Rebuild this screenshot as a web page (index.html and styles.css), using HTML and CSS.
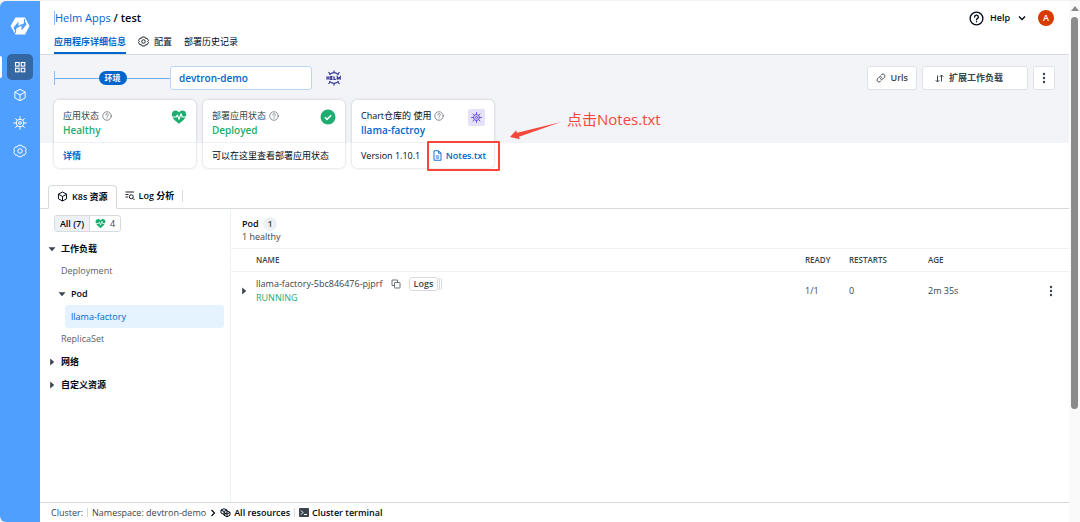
FILE: index.html
```html
<!DOCTYPE html>
<html lang="zh">
<head>
    <meta charset="utf-8">
    <title>Helm Apps / test</title>
    <link rel="stylesheet" href="styles.css">
</head>
<body>
    <!-- shared icons -->
    <svg class="sprite" width="0" height="0">
        <symbol id="i-help" viewBox="0 0 20 20" fill="none" stroke="currentColor" stroke-linecap="round">
            <circle cx="10" cy="10" r="8.5"/>
            <path d="M7.5 8a2.5 2.5 0 1 1 3.6 2.2c-.8.4-1.1.8-1.1 1.6"/>
            <path d="M10 14.2v.2"/>
        </symbol>
        <symbol id="i-gear" viewBox="0 0 20 20" fill="none" stroke="currentColor" stroke-linejoin="round">
            <circle cx="10" cy="10" r="3.2"/>
            <path d="M7.6 1.8h4.800l1.400 2.400h2.800L19 8.200 17.600 10l1.400 1.800-2.400 4h-2.800l-1.400 2.400H7.600l-1.400-2.400H3.400L1 11.800 2.400 10 1 8.200l2.400-4h2.800z"/>
        </symbol>
        <symbol id="i-helm" viewBox="0 0 20 20" fill="none" stroke="currentColor" stroke-linecap="round">
            <circle cx="10" cy="10" r="5.4"/>
            <circle cx="10" cy="10" r="2"/>
            <path d="M10 1v3.600M10 15.400V19M1 10h3.600M15.400 10H19M3.600 3.600l2.600 2.600M13.800 13.800l2.600 2.600M16.400 3.600l-2.600 2.600M6.200 13.800l-2.600 2.600"/>
        </symbol>
        <symbol id="i-cube" viewBox="0 0 20 20" fill="none" stroke="currentColor" stroke-linejoin="round">
            <path d="M10 1.800l7.400 4v8.400l-7.400 4-7.400-4V5.800z"/>
            <path d="M2.600 5.800l7.400 4.200 7.400-4.200M10 10v8.200"/>
        </symbol>
        <symbol id="i-heart" viewBox="0 0 20 20">
            <path fill="#1dad70" d="M10 18.500C6 15.500 1 11.800 1 7c0-3 2.200-5 4.700-5C7.500 2 9.100 3 10 4.500 10.900 3 12.500 2 14.300 2 16.800 2 19 4 19 7c0 4.800-5 8.500-9 11.500z"/>
            <path fill="none" stroke="#fff" stroke-width="1.400" stroke-linejoin="round" d="M1 10h5.500l1.500-2.500 2 5.500 2.500-7 1.500 4h5"/>
        </symbol>
        <symbol id="i-dots" viewBox="0 0 4 12" fill="currentColor">
            <circle cx="2" cy="2" r="1.200"/><circle cx="2" cy="6" r="1.200"/><circle cx="2" cy="10" r="1.200"/>
        </symbol>
        <symbol id="i-caret" viewBox="0 0 8 8" fill="currentColor">
            <path d="M.5 2.200h7L4 6.200z"/>
        </symbol>
    </svg>

    <div class="app">
        <nav class="sidebar">
            <a class="logo" href="#" aria-label="Home">
                <svg width="20" height="18" viewBox="0 0 20 18">
                    <path fill="#fff" d="M5.500.5h9.500L19.500 9 15 17.500H5.500L.5 9z"/>
                    <path fill="#4e9fff" d="M8.500 4.500v5.500L4.500 13l-1-2.500zM11.500 13.500V8l4-3 1 2.500z"/>
                    <path fill="none" stroke="#4e9fff" stroke-width="1.200" d="M8 9.800l4-2.200M5.500 12v4M14.500 6V2"/>
                </svg>
            </a>
            <a class="nav-item active" href="#" aria-label="Applications">
                <svg width="12" height="12" viewBox="0 0 12 12" fill="none" stroke="currentColor" stroke-width="1.100">
                    <rect x="1.500" y="1.500" width="3.600" height="3.600"/><rect x="7.200" y="1.500" width="3.600" height="3.600"/>
                    <rect x="1.500" y="7.200" width="3.600" height="3.600"/><rect x="7.200" y="7.200" width="3.600" height="3.600"/>
                </svg>
            </a>
            <a class="nav-item" href="#" aria-label="Charts"><svg class="nav-icon"><use href="#i-cube"/></svg></a>
            <a class="nav-item" href="#" aria-label="Clusters"><svg class="nav-icon"><use href="#i-helm"/></svg></a>
            <a class="nav-item" href="#" aria-label="Settings"><svg class="nav-icon"><use href="#i-gear"/></svg></a>
        </nav>

        <main class="main">
            <header class="header">
                <div class="title-row">
                    <h1 class="title"><a href="#">Helm Apps</a> / test</h1>
                    <button class="help" type="button">
                        <svg class="help-icon"><use href="#i-help"/></svg>
                        Help
                        <svg class="chevron" width="8" height="8" viewBox="0 0 8 8" fill="none" stroke="currentColor" stroke-width="1.400"><path d="M1 2.500l3 3 3-3"/></svg>
                    </button>
                    <button class="avatar" type="button">A</button>
                </div>
                <div class="tabs">
                    <a class="tab active" href="#">应用程序详细信息</a>
                    <a class="tab" href="#"><svg class="tab-icon"><use href="#i-gear"/></svg>配置</a>
                    <a class="tab" href="#">部署历史记录</a>
                </div>
            </header>

            <section class="overview">
                <div class="env-row">
                    <span class="env-line"><label class="env-label" for="env">环境</label></span>
                    <select class="env-select" id="env"><option>devtron-demo</option></select>
                    <svg class="helm-logo" width="16" height="16" viewBox="0 0 32 32" fill="none" stroke="#2b2a8c" stroke-width="2.200">
                        <path d="M7 10a11 11 0 0 1 18 0M7 22a11 11 0 0 0 18 0M16 6V1M16 26v5M8 8L5 4M24 8l3-4M8 24l-3 4M24 24l3 4"/>
                        <path d="M2 12.500v7M6 12.500v7M2 16h4M13 13.200H9.500v5.600H13M9.500 16h3M16 12.500v6.300h3.500M22.500 19.500v-6l3 4 3-4v6"/>
                    </svg>
                    <div class="actions">
                        <button class="btn" type="button">
                            <svg width="10" height="10" viewBox="0 0 20 20" fill="none" stroke="currentColor" stroke-width="1.800" stroke-linecap="round"><path d="M8.500 11.500a4 4 0 0 0 5.600 0l3-3a4 4 0 0 0-5.600-5.600L10 4.400M11.500 8.500a4 4 0 0 0-5.600 0l-3 3a4 4 0 0 0 5.600 5.600l1.500-1.500"/></svg>
                            Urls
                        </button>
                        <button class="btn btn-wide" type="button">
                            <svg width="9" height="9" viewBox="0 0 18 18" fill="none" stroke="currentColor" stroke-width="2"><path d="M5 3v13M1.500 12.500L5 16l3.500-3.500M13 15V2M9.500 5.500L13 2l3.500 3.500"/></svg>
                            扩展工作负载
                        </button>
                        <button class="btn btn-more" type="button" aria-label="More"><svg class="dots"><use href="#i-dots"/></svg></button>
                    </div>
                </div>

                <div class="cards">
                    <article class="card">
                        <div class="card-top">
                            <div>
                                <div class="card-label">应用状态 <svg class="hint"><use href="#i-help"/></svg></div>
                                <div class="card-value ok">Healthy</div>
                            </div>
                            <svg class="card-icon"><use href="#i-heart"/></svg>
                        </div>
                        <div class="card-bottom"><a class="link" href="#">详情</a></div>
                    </article>
                    <article class="card">
                        <div class="card-top">
                            <div>
                                <div class="card-label">部署应用状态 <svg class="hint"><use href="#i-help"/></svg></div>
                                <div class="card-value ok">Deployed</div>
                            </div>
                            <svg class="card-icon" viewBox="0 0 16 16"><circle cx="8" cy="8" r="7.500" fill="#1dad70"/><path d="M4.800 8.200l2.200 2.200 4.200-4.200" fill="none" stroke="#fff" stroke-width="1.500"/></svg>
                        </div>
                        <div class="card-bottom">可以在这里查看部署应用状态</div>
                    </article>
                    <article class="card">
                        <div class="card-top">
                            <div>
                                <div class="card-label dark">Chart仓库的 使用 <svg class="hint"><use href="#i-help"/></svg></div>
                                <div class="card-value"><a href="#">llama-factroy</a></div>
                            </div>
                            <span class="chart-icon"><svg><use href="#i-helm"/></svg></span>
                        </div>
                        <div class="card-bottom">
                            Version 1.10.1
                            <a class="notes" href="#">
                                <svg width="9" height="11" viewBox="0 0 18 22" fill="none" stroke="currentColor" stroke-width="1.800" stroke-linejoin="round"><path d="M2 1.500h9l5 5v14H2zM11 1.500v5h5M5.500 12h7M5.500 16h7"/></svg>
                                Notes.txt
                            </a>
                        </div>
                        <span class="callout-box"></span>
                        <div class="callout">
                            <svg width="52" height="20" viewBox="0 0 52 20"><path fill="#f5483b" d="M0 16L6 9.500l1.200 2.300L51 1 9 15.800l.8 2.400z"/></svg>
                            <span>点击Notes.txt</span>
                        </div>
                    </article>
                </div>
            </section>

            <div class="res-tabs">
                <a class="res-tab active" href="#"><svg class="res-icon"><use href="#i-cube"/></svg>K8s 资源</a>
                <a class="res-tab" href="#">
                    <svg width="10" height="10" viewBox="0 0 20 20" fill="none" stroke="currentColor" stroke-width="1.800"><path d="M1 2h17M1 7h6M1 12h5"/><circle cx="12.500" cy="11.500" r="4"/><path d="M15.500 14.500L19 18"/></svg>
                    Log 分析
                </a>
                <span class="res-sep"></span>
            </div>

            <section class="resources">
                <aside class="tree">
                    <div class="filter">
                        <button class="filter-btn active" type="button">All (7)</button>
                        <button class="filter-btn" type="button"><svg><use href="#i-heart"/></svg>4</button>
                    </div>
                    <div class="node group"><svg class="caret"><use href="#i-caret"/></svg>工作负载</div>
                    <a class="node leaf" href="#">Deployment</a>
                    <div class="node group nested"><svg class="caret"><use href="#i-caret"/></svg>Pod</div>
                    <a class="node selected" href="#">llama-factory</a>
                    <a class="node leaf" href="#">ReplicaSet</a>
                    <div class="node group"><svg class="caret closed"><use href="#i-caret"/></svg>网络</div>
                    <div class="node group"><svg class="caret closed"><use href="#i-caret"/></svg>自定义资源</div>
                </aside>

                <div class="detail">
                    <div class="detail-head">
                        <h2>Pod <span class="count">1</span></h2>
                        <p>1 healthy</p>
                    </div>
                    <table class="pods">
                        <thead>
                            <tr>
                                <th class="col-toggle"></th>
                                <th>NAME</th>
                                <th class="col-ready">READY</th>
                                <th class="col-restarts">RESTARTS</th>
                                <th class="col-age">AGE</th>
                                <th class="col-menu"></th>
                            </tr>
                        </thead>
                        <tbody>
                            <tr>
                                <td class="col-toggle"><svg class="caret closed"><use href="#i-caret"/></svg></td>
                                <td>
                                    <div class="pod-name">
                                        llama-factory-5bc846476-pjprf
                                        <svg class="copy" width="10" height="10" viewBox="0 0 20 20" fill="none" stroke="currentColor" stroke-width="1.800" stroke-linejoin="round"><rect x="7" y="7" width="11" height="11" rx="1"/><path d="M13 7V2H2v11h5"/></svg>
                                        <button class="logs" type="button">Logs</button>
                                    </div>
                                    <div class="pod-status">RUNNING</div>
                                </td>
                                <td>1/1</td>
                                <td>0</td>
                                <td>2m 35s</td>
                                <td><svg class="dots"><use href="#i-dots"/></svg></td>
                            </tr>
                        </tbody>
                    </table>
                </div>
            </section>

            <footer class="footer">
                <span>Cluster:</span>
                <span class="foot-sep"></span>
                <span>Namespace: devtron-demo</span>
                <svg width="6" height="8" viewBox="0 0 6 8" fill="none" stroke="#000a14" stroke-width="1.200"><path d="M1.500 1l3 3-3 3"/></svg>
                <a href="#">
                    <svg width="11" height="10" viewBox="0 0 22 20" fill="none" stroke="currentColor" stroke-width="2" stroke-linejoin="round"><path d="M8 1.500l6 2.500v6l-6 3-6-3V4zM2 4l6 3 6-3M8 7v6M14 6l6 2.500v6l-6 3-6-3v-2M8 9l6 3 6-3M14 12v5.500"/></svg>
                    All resources
                </a>
                <span class="foot-sep"></span>
                <a href="#">
                    <svg width="10" height="9" viewBox="0 0 10 9"><rect width="10" height="9" rx="1" fill="#3b444c"/><path d="M2 2.500l2 2-2 2M5 6.500h3" fill="none" stroke="#fff"/></svg>
                    Cluster terminal
                </a>
            </footer>
        </main>

        <div class="scrollbar"><span class="scroll-up"></span><span class="scroll-thumb"></span></div>
    </div>
</body>
</html>
```
FILE: styles.css
```css
* {
    box-sizing: border-box;
}
body {
    margin: 0;
    background: #f2f2f2;
    color: #3b444c;
    font-family: "Open Sans", "Noto Sans CJK SC", sans-serif;
    font-size: 9px;
    line-height: 14px;
}
a {
    color: #0066cc;
    text-decoration: none;
}
button {
    padding: 0;
    border: none;
    background: none;
    color: inherit;
    font: inherit;
    cursor: pointer;
}
svg {
    flex: none;
}
h1, h2, p {
    margin: 0;
}
.sprite {
    position: absolute;
}
.app {
    display: flex;
    height: 100vh;
    padding-top: 1px;
}

/* sidebar */
.sidebar {
    display: flex;
    flex-direction: column;
    align-items: center;
    gap: 2px;
    width: 40px;
    padding-top: 16px;
    background: #4e9fff;
    border-radius: 6px 0 0 6px;
}
.logo {
    height: 35px;
}
.nav-item {
    display: flex;
    align-items: center;
    justify-content: center;
    width: 26px;
    height: 26px;
    border-radius: 5px;
    color: #fff;
}
.nav-item.active {
    position: relative;
    background: #3567a3;
}
.nav-item.active::before {
    content: "";
    position: absolute;
    left: -7px;
    top: 2px;
    width: 2px;
    height: 22px;
    border-radius: 0 2px 2px 0;
    background: #fff;
}
.nav-icon {
    width: 14px;
    height: 14px;
    stroke-width: 1.4;
}

.main {
    flex: 1;
    min-width: 0;
    display: flex;
    flex-direction: column;
    background: #fff;
}

/* header */
.header {
    padding: 8px 15px 0 14px;
    border-bottom: 1px solid #d6dbdf;
}
.title-row {
    display: flex;
    align-items: center;
    height: 18px;
}
.title {
    flex: 1;
    border-left: 1px solid #8dbcec;
    color: #000a14;
    font-size: 11px;
    font-weight: 600;
}
.title a {
    font-weight: 400;
}
.help {
    display: flex;
    align-items: center;
    gap: 6px;
    color: #000a14;
    font-weight: 600;
}
.help-icon {
    width: 15px;
    height: 15px;
    stroke-width: 1.8;
}
.chevron {
    margin-left: 2px;
}
.avatar {
    width: 16px;
    height: 16px;
    margin-left: 12px;
    border-radius: 50%;
    background: #d93a00;
    color: #fff;
    font-weight: 600;
    line-height: 16px;
}
.tabs {
    display: flex;
    gap: 12px;
}
.tab {
    display: flex;
    align-items: center;
    gap: 5px;
    height: 27px;
    padding-top: 4px;
    border-bottom: 2px solid transparent;
    color: #000a14;
}
.tab.active {
    border-bottom-color: #0066cc;
    color: #0066cc;
    font-weight: 600;
}
.tab-icon {
    width: 11px;
    height: 11px;
    stroke-width: 1.6;
}

/* environment + cards */
.overview {
    padding: 11px 14px 0;
    background: linear-gradient(#f2f4f8 88px, #fff 88px);
}
.env-row {
    display: flex;
    align-items: center;
}
.env-line {
    display: flex;
    justify-content: center;
    width: 116px;
    border-left: 1px solid #8dbcec;
    background: linear-gradient(#6cabeb, #6cabeb) center / 100% 1px no-repeat;
}
.env-label {
    padding: 0 6px;
    border-radius: 7px;
    background: #0066cc;
    color: #fff;
    font-size: 8px;
    font-weight: 600;
}
.env-select {
    width: 142px;
    height: 24px;
    padding: 0 8px;
    appearance: none;
    border: 1px solid #b8d8f8;
    border-radius: 3px;
    background: #fff;
    color: #0066cc;
    font: 600 10px "Open Sans", sans-serif;
}
.helm-logo {
    margin-left: 14px;
}
.actions {
    display: flex;
    gap: 5px;
    margin-left: auto;
}
.btn {
    display: flex;
    align-items: center;
    gap: 5px;
    height: 24px;
    padding: 0 8px;
    border: 1px solid #dfe3e8;
    border-radius: 3px;
    background: #fff;
    font-weight: 600;
}
.btn-wide {
    width: 106px;
    padding: 0 12px;
}
.btn-more {
    width: 22px;
    justify-content: center;
    padding: 0;
}
.dots {
    display: block;
    width: 4px;
    height: 12px;
}
.cards {
    display: flex;
    gap: 7px;
    padding: 10px 0 16px;
}
.card {
    position: relative;
    width: 142px;
    border-radius: 5px;
    background: #fff;
    box-shadow: 0 0 3px rgba(0, 10, 20, 0.2);
}
.card-top {
    display: flex;
    justify-content: space-between;
    height: 43px;
    padding: 9px 9px 0;
    border-bottom: 1px solid #edf1f5;
}
.card-label {
    display: flex;
    align-items: center;
    gap: 3px;
}
.card-label.dark {
    color: #000a14;
}
.hint {
    width: 10px;
    height: 10px;
    color: #596168;
    stroke-width: 1.4;
}
.card-value {
    font-size: 10px;
    font-weight: 600;
}
.ok {
    color: #1dad70;
}
.card-icon {
    width: 16px;
    height: 16px;
}
.chart-icon {
    display: flex;
    align-items: center;
    justify-content: center;
    width: 17px;
    height: 17px;
    border-radius: 2px;
    background: #e6e1fb;
    color: #664bee;
}
.chart-icon svg {
    width: 11px;
    height: 11px;
    stroke-width: 1.8;
}
.card-bottom {
    display: flex;
    align-items: center;
    justify-content: space-between;
    height: 25px;
    padding: 0 8px 0 9px;
    color: #000a14;
}
.link {
    font-weight: 600;
}
.notes {
    display: flex;
    align-items: center;
    gap: 4px;
    font-weight: 600;
}
.callout-box {
    position: absolute;
    left: 75px;
    top: 41px;
    width: 73px;
    height: 30px;
    border: 2px solid #f5483b;
    border-radius: 1px;
}
.callout {
    position: absolute;
    left: 158px;
    top: 8px;
    display: flex;
    gap: 5px;
    color: #f5483b;
    font-size: 15px;
    line-height: 22px;
    white-space: nowrap;
}
.callout svg {
    margin-top: 13px;
}

/* resource tabs */
.res-tabs {
    display: flex;
    align-items: center;
    padding-left: 8px;
    border-bottom: 1px solid #d6dbdf;
}
.res-tab {
    display: flex;
    align-items: center;
    gap: 4px;
    height: 24px;
    padding: 0 8px;
    color: #000a14;
    font-weight: 600;
}
.res-tab.active {
    margin-bottom: -1px;
    border: 1px solid #d6dbdf;
    border-bottom-color: #fff;
    border-radius: 4px 4px 0 0;
    background: #fff;
}
.res-icon {
    width: 11px;
    height: 11px;
    stroke-width: 1.8;
}
.res-sep {
    width: 1px;
    height: 12px;
    background: #d6dbdf;
}

/* resource tree */
.resources {
    flex: 1;
    min-height: 0;
    display: flex;
}
.tree {
    width: 191px;
    padding: 6px 6px 0 8px;
    border-right: 1px solid #edf1f5;
}
.filter {
    display: flex;
    width: 67px;
    margin: 0 0 5px 6px;
    border: 1px solid #d6dbdf;
    border-radius: 3px;
    overflow: hidden;
}
.filter-btn {
    display: flex;
    flex: 1;
    align-items: center;
    justify-content: center;
    gap: 4px;
    height: 15px;
}
.filter-btn.active {
    flex: none;
    width: 35px;
    border-right: 1px solid #d6dbdf;
    background: #edf1f5;
    color: #000a14;
    font-weight: 600;
}
.filter-btn svg {
    width: 11px;
    height: 11px;
}
.node {
    display: flex;
    align-items: center;
    height: 22px;
    color: #596168;
}
.group {
    gap: 5px;
    height: 23px;
    color: #000a14;
    font-weight: 600;
}
.nested {
    padding-left: 10px;
}
.leaf {
    padding-left: 13px;
}
.selected {
    height: 23px;
    margin-left: 17px;
    padding-left: 6px;
    border-radius: 3px;
    background: #e5f2ff;
    color: #0066cc;
}
.caret {
    display: block;
    width: 8px;
    height: 8px;
    color: #3b444c;
}
.caret.closed {
    transform: rotate(-90deg);
}

/* pod table */
.detail {
    flex: 1;
}
.detail-head {
    height: 39px;
    padding: 8px 11px 0;
}
.detail-head h2 {
    color: #000a14;
    font-size: 9px;
    font-weight: 600;
}
.count {
    display: inline-block;
    width: 14px;
    margin-left: 2px;
    border-radius: 7px;
    background: #edf1f5;
    color: #3b444c;
    text-align: center;
}
.detail-head p {
    line-height: 12px;
}
.pods {
    width: 100%;
    border-collapse: collapse;
    table-layout: fixed;
}
.pods th {
    height: 23px;
    padding: 0;
    border-top: 1px solid #edf1f5;
    border-bottom: 1px solid #edf1f5;
    font-size: 8px;
    font-weight: 600;
    text-align: left;
}
.pods td {
    height: 38px;
    padding: 0;
}
.pods .col-toggle {
    width: 25px;
    padding-left: 9px;
}
.col-ready {
    width: 44px;
}
.col-restarts {
    width: 79px;
}
.col-age {
    width: 121px;
}
.col-menu {
    width: 20px;
}
.pod-name {
    display: flex;
    align-items: center;
    gap: 8px;
}
.copy {
    color: #596168;
}
.logs {
    height: 14px;
    padding: 0 4px;
    border: 1px solid #d6dbdf;
    border-radius: 3px;
    box-shadow: 2px 0 0 -1px #fff, 3px 0 0 -1px #d6dbdf, 4px 0 0 -1px #fff, 5px 0 0 -1px #d6dbdf;
    font-weight: 600;
    line-height: 12px;
}
.pod-status {
    color: #1dad70;
}

/* footer */
.footer {
    display: flex;
    align-items: center;
    gap: 4px;
    height: 20px;
    padding: 0 11px;
    border-top: 1px solid #d6dbdf;
}
.footer a {
    display: flex;
    align-items: center;
    gap: 3px;
    color: #000a14;
    font-weight: 600;
}
.foot-sep {
    width: 1px;
    height: 9px;
    background: #d6dbdf;
}

/* scrollbar */
.scrollbar {
    display: flex;
    flex-direction: column;
    align-items: center;
    width: 11px;
    padding-top: 5px;
    background: #fafafa;
}
.scroll-up {
    border: 4px solid transparent;
    border-top: none;
    border-bottom: 5px solid #8b8b8b;
}
.scroll-thumb {
    width: 7px;
    height: 76%;
    margin-top: 6px;
    border-radius: 4px;
    background: #8b8b8b;
}
```
